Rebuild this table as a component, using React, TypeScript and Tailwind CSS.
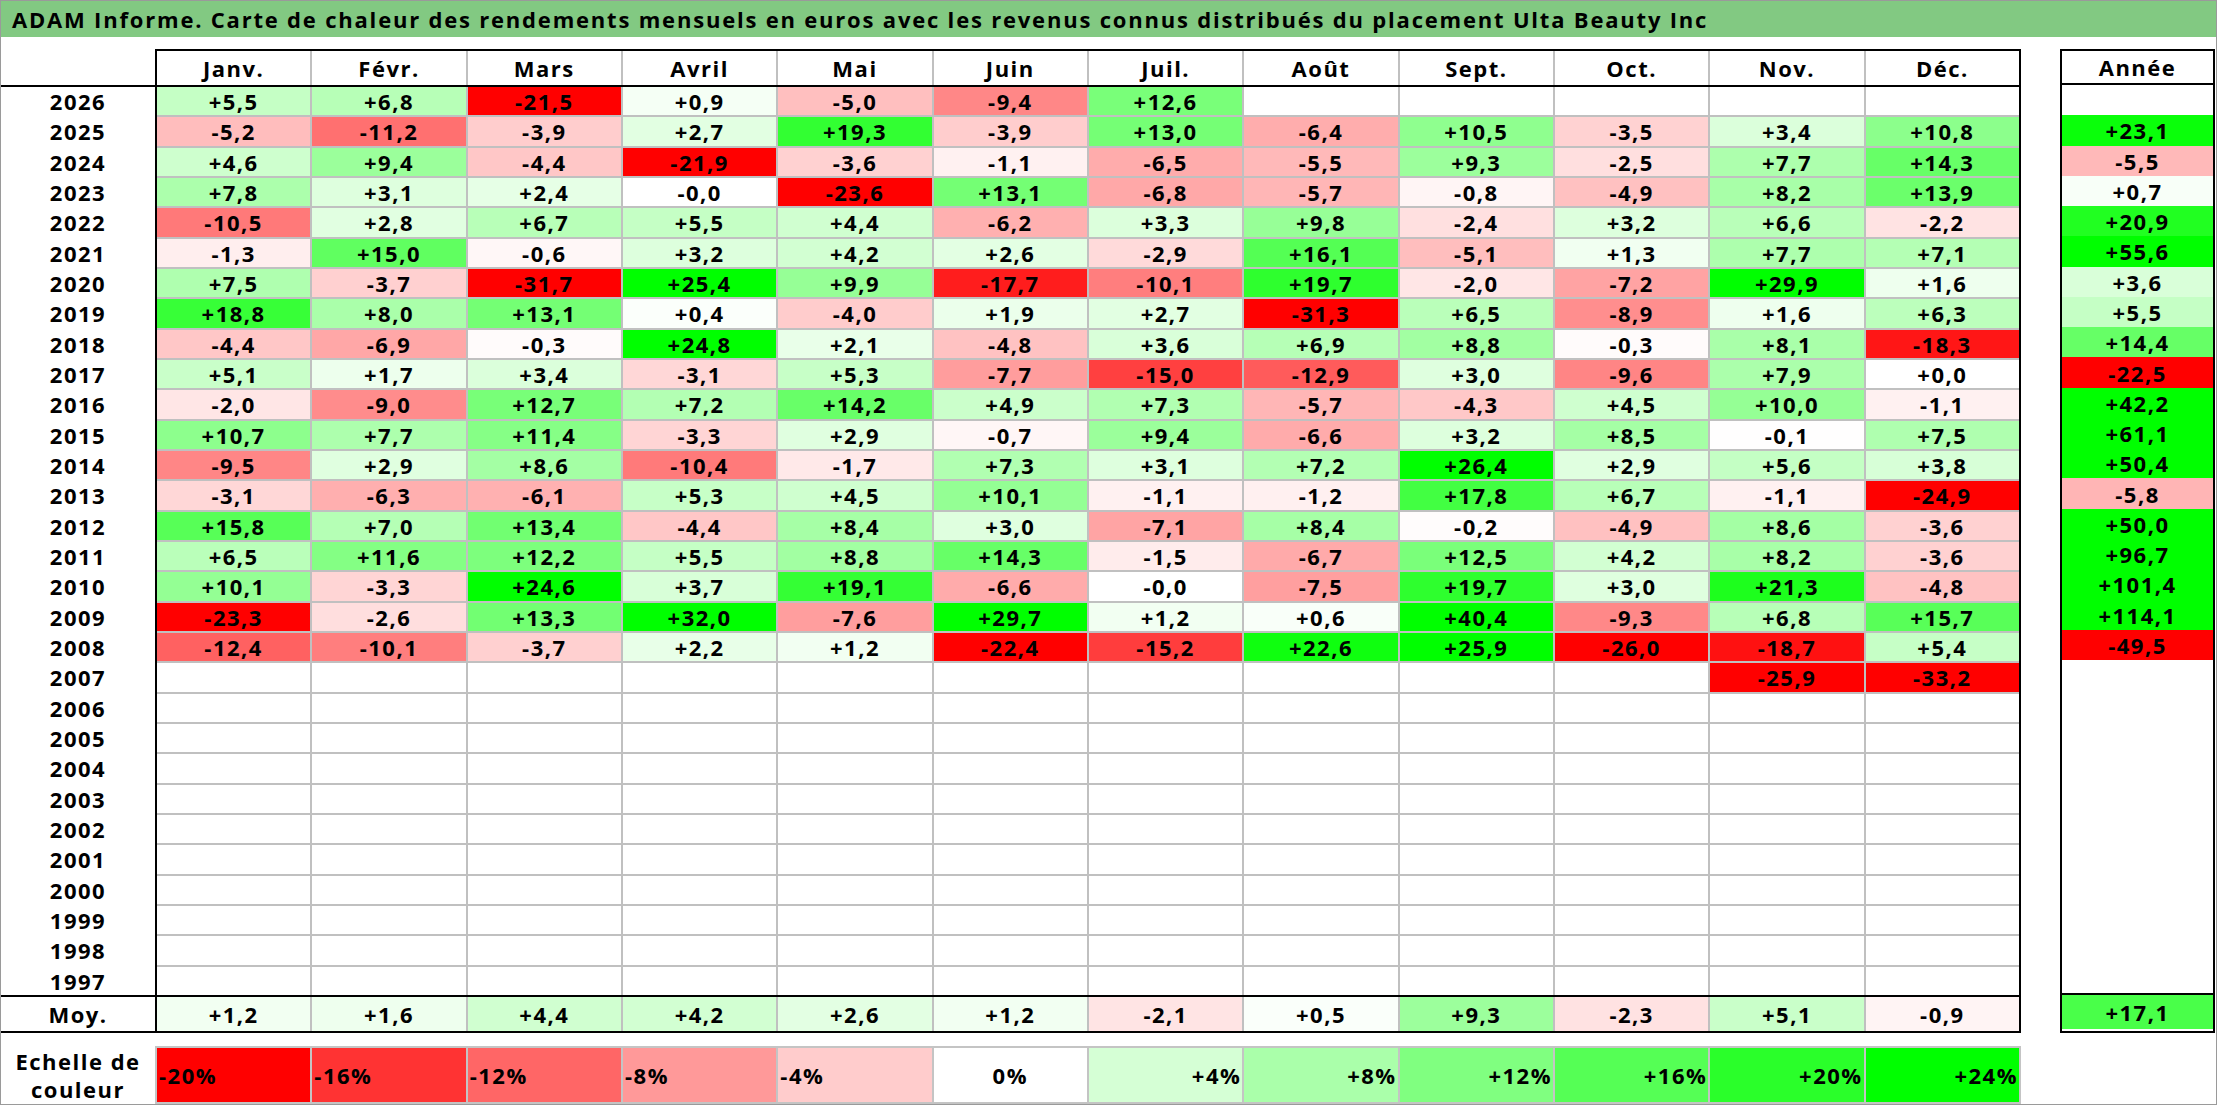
import React from "react";

const MONTHS = ["Janv.", "Févr.", "Mars", "Avril", "Mai", "Juin", "Juil.", "Août", "Sept.", "Oct.", "Nov.", "Déc."];

const RAW: [string, string][] = [
  ["2026", "+5,5 +6,8 -21,5 +0,9 -5,0 -9,4 +12,6 _ _ _ _ _ _"],
  ["2025", "-5,2 -11,2 -3,9 +2,7 +19,3 -3,9 +13,0 -6,4 +10,5 -3,5 +3,4 +10,8 +23,1"],
  ["2024", "+4,6 +9,4 -4,4 -21,9 -3,6 -1,1 -6,5 -5,5 +9,3 -2,5 +7,7 +14,3 -5,5"],
  ["2023", "+7,8 +3,1 +2,4 -0,0 -23,6 +13,1 -6,8 -5,7 -0,8 -4,9 +8,2 +13,9 +0,7"],
  ["2022", "-10,5 +2,8 +6,7 +5,5 +4,4 -6,2 +3,3 +9,8 -2,4 +3,2 +6,6 -2,2 +20,9"],
  ["2021", "-1,3 +15,0 -0,6 +3,2 +4,2 +2,6 -2,9 +16,1 -5,1 +1,3 +7,7 +7,1 +55,6"],
  ["2020", "+7,5 -3,7 -31,7 +25,4 +9,9 -17,7 -10,1 +19,7 -2,0 -7,2 +29,9 +1,6 +3,6"],
  ["2019", "+18,8 +8,0 +13,1 +0,4 -4,0 +1,9 +2,7 -31,3 +6,5 -8,9 +1,6 +6,3 +5,5"],
  ["2018", "-4,4 -6,9 -0,3 +24,8 +2,1 -4,8 +3,6 +6,9 +8,8 -0,3 +8,1 -18,3 +14,4"],
  ["2017", "+5,1 +1,7 +3,4 -3,1 +5,3 -7,7 -15,0 -12,9 +3,0 -9,6 +7,9 +0,0 -22,5"],
  ["2016", "-2,0 -9,0 +12,7 +7,2 +14,2 +4,9 +7,3 -5,7 -4,3 +4,5 +10,0 -1,1 +42,2"],
  ["2015", "+10,7 +7,7 +11,4 -3,3 +2,9 -0,7 +9,4 -6,6 +3,2 +8,5 -0,1 +7,5 +61,1"],
  ["2014", "-9,5 +2,9 +8,6 -10,4 -1,7 +7,3 +3,1 +7,2 +26,4 +2,9 +5,6 +3,8 +50,4"],
  ["2013", "-3,1 -6,3 -6,1 +5,3 +4,5 +10,1 -1,1 -1,2 +17,8 +6,7 -1,1 -24,9 -5,8"],
  ["2012", "+15,8 +7,0 +13,4 -4,4 +8,4 +3,0 -7,1 +8,4 -0,2 -4,9 +8,6 -3,6 +50,0"],
  ["2011", "+6,5 +11,6 +12,2 +5,5 +8,8 +14,3 -1,5 -6,7 +12,5 +4,2 +8,2 -3,6 +96,7"],
  ["2010", "+10,1 -3,3 +24,6 +3,7 +19,1 -6,6 -0,0 -7,5 +19,7 +3,0 +21,3 -4,8 +101,4"],
  ["2009", "-23,3 -2,6 +13,3 +32,0 -7,6 +29,7 +1,2 +0,6 +40,4 -9,3 +6,8 +15,7 +114,1"],
  ["2008", "-12,4 -10,1 -3,7 +2,2 +1,2 -22,4 -15,2 +22,6 +25,9 -26,0 -18,7 +5,4 -49,5"],
  ["2007", "_ _ _ _ _ _ _ _ _ _ -25,9 -33,2 _"],
  ["2006", "_ _ _ _ _ _ _ _ _ _ _ _ _"],
  ["2005", "_ _ _ _ _ _ _ _ _ _ _ _ _"],
  ["2004", "_ _ _ _ _ _ _ _ _ _ _ _ _"],
  ["2003", "_ _ _ _ _ _ _ _ _ _ _ _ _"],
  ["2002", "_ _ _ _ _ _ _ _ _ _ _ _ _"],
  ["2001", "_ _ _ _ _ _ _ _ _ _ _ _ _"],
  ["2000", "_ _ _ _ _ _ _ _ _ _ _ _ _"],
  ["1999", "_ _ _ _ _ _ _ _ _ _ _ _ _"],
  ["1998", "_ _ _ _ _ _ _ _ _ _ _ _ _"],
  ["1997", "_ _ _ _ _ _ _ _ _ _ _ _ _"],
];

const ROWS = RAW.map(([year, s]) => {
  const vals = s.split(" ").map((v) => (v === "_" ? "" : v));
  return { year, months: vals.slice(0, 12), total: vals[12] };
});

const AVG = "+1,2 +1,6 +4,4 +4,2 +2,6 +1,2 -2,1 +0,5 +9,3 -2,3 +5,1 -0,9".split(" ");
const AVG_TOTAL = "+17,1";

const LEGEND = [-20, -16, -12, -8, -4, 0, 4, 8, 12, 16, 20, 24];

function colorOf(v: number): string {
  if (v < 0) {
    const t = Math.min(1, -v / 20);
    const c = Math.round(255 * (1 - t));
    return `rgb(255,${c},${c})`;
  }
  const t = Math.min(1, v / 24);
  const c = Math.round(255 * (1 - t));
  return `rgb(${c},255,${c})`;
}

function bg(s: string): string {
  if (!s) return "#ffffff";
  return colorOf(parseFloat(s.replace(",", ".")));
}

function Cell({ v }: { v: string }) {
  return (
    <div className="flex items-center justify-center" style={{ backgroundColor: bg(v) }}>
      {v}
    </div>
  );
}

export default function App() {
  return (
    <div className="w-[2217px] h-[1105px] border border-[#9a9a9a] bg-white flex flex-col text-black font-bold font-['Open_Sans',sans-serif] overflow-hidden">
      <div className="h-[36px] shrink-0 bg-[#82c982] flex items-center pl-[11px] text-[22px] tracking-[1.8px] leading-none">
        ADAM Informe. Carte de chaleur des rendements mensuels en euros avec les revenus connus distribués du placement Ulta Beauty Inc
      </div>

      <div className="mt-[12px] flex shrink-0 text-[22px] tracking-[1.5px] leading-none">
        {/* Left: years + months */}
        <div className="w-[2020px] flex flex-col">
          <div className="flex h-[36px]">
            <div className="w-[154px]" />
            <div className="flex-1 border-t-2 border-x-2 border-black grid grid-cols-12 gap-x-[2px] bg-[#c0c0c0]">
              {MONTHS.map((m) => (
                <div key={m} className="bg-white flex items-center justify-center">
                  {m}
                </div>
              ))}
            </div>
          </div>
          <div className="h-[2px] bg-black" />
          <div className="flex h-[908px]">
            <div className="w-[154px] grid grid-rows-[repeat(30,minmax(0,1fr))] gap-y-[2px]">
              {ROWS.map((r) => (
                <div key={r.year} className="flex items-center justify-center">
                  {r.year}
                </div>
              ))}
            </div>
            <div className="flex-1 border-x-2 border-black grid grid-cols-12 grid-rows-[repeat(30,minmax(0,1fr))] gap-[2px] bg-[#c0c0c0]">
              {ROWS.map((r) => r.months.map((v, i) => <Cell key={r.year + i} v={v} />))}
            </div>
          </div>
          <div className="flex h-[38px] border-y-2 border-black">
            <div className="w-[154px] flex items-center justify-center">Moy.</div>
            <div className="flex-1 border-x-2 border-black grid grid-cols-12 gap-x-[2px] bg-[#c0c0c0]">
              {AVG.map((v, i) => (
                <Cell key={i} v={v} />
              ))}
            </div>
          </div>
        </div>

        <div className="w-[39px]" />

        {/* Right: Année */}
        <div className="w-[155px] border-2 border-black flex flex-col">
          <div className="h-[34px] flex items-center justify-center border-b-2 border-black">Année</div>
          <div className="h-[908px] grid grid-rows-[repeat(30,minmax(0,1fr))]">
            {ROWS.map((r) => (
              <Cell key={r.year} v={r.total} />
            ))}
          </div>
          <div className="h-[36px] border-t-2 border-black flex">
            <div className="flex-1 flex items-center justify-center" style={{ backgroundColor: bg(AVG_TOTAL) }}>
              {AVG_TOTAL}
            </div>
          </div>
        </div>
      </div>

      <div className="mt-[13px] flex flex-1 text-[22px] tracking-[1.5px] leading-none">
        <div className="w-[154px] flex flex-col items-center justify-center gap-[6px]">
          <span>Echelle de</span>
          <span>couleur</span>
        </div>
        <div className="w-[1866px] grid grid-cols-12 gap-x-[2px] bg-[#c4c4c4] border-2 border-[#c4c4c4]">
          {LEGEND.map((p) => (
            <div
              key={p}
              className={
                p < 0
                  ? "flex items-center justify-start pl-[2px]"
                  : p === 0
                  ? "flex items-center justify-center"
                  : "flex items-center justify-end pr-[1px]"
              }
              style={{ backgroundColor: colorOf(p) }}
            >
              {p > 0 ? `+${p}%` : `${p}%`}
            </div>
          ))}
        </div>
      </div>
    </div>
  );
}
